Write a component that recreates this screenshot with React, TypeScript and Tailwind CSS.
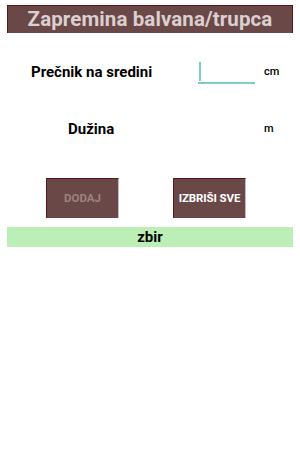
export default function App() {
  return (
    <div className="w-[300px] h-[473px] bg-white font-['Roboto',sans-serif] pt-[5px] px-[7px]">
      <div className="h-[28px] bg-[#6b4848] border-t border-x border-[#5a1818] flex items-center justify-center">
        <span className="text-[20.5px] font-bold text-[#dccfcf] leading-none tracking-[0.1px]">Zapremina balvana/trupca</span>
      </div>

      <div className="flex items-center h-[24px] mt-[27px]">
        <span className="w-[191px] pl-[24px] text-[15px] font-bold text-black">Prečnik na sredini</span>
        <div className="relative w-[57px] h-[24px] border-b-2 border-[#80cbc4]">
          <div className="absolute left-[1px] top-[2px] w-[2px] h-[19px] bg-[#80cbc4]" />
        </div>
        <span className="ml-[9px] text-[11px] font-medium text-black">cm</span>
      </div>

      <div className="flex items-center h-[24px] mt-[33px]">
        <span className="w-[191px] pl-[61px] text-[15px] font-bold text-black">Dužina</span>
        <div className="w-[57px]" />
        <span className="ml-[9px] text-[11px] font-medium text-black">m</span>
      </div>

      <div className="flex mt-[37px] h-[40px]">
        <div className="ml-[39px] w-[73px] h-[40px] bg-[#6b4848] border-t border-l border-[#5a1818] border-r border-r-[#c8bcbc] flex items-center justify-center">
          <span className="text-[11.5px] font-bold text-[#9e8282]">DODAJ</span>
        </div>
        <div className="ml-[54px] w-[73px] h-[40px] bg-[#6b4848] border-t border-l border-[#5a1818] border-r border-r-[#c8bcbc] flex items-center justify-center">
          <span className="text-[11.5px] font-bold text-white tracking-[-0.1px]">IZBRIŠI SVE</span>
        </div>
      </div>

      <div className="mt-[9px] h-[20px] bg-[#bbefb5] flex items-center justify-center">
        <span className="text-[15px] font-bold text-black">zbir</span>
      </div>
    </div>
  );
}
